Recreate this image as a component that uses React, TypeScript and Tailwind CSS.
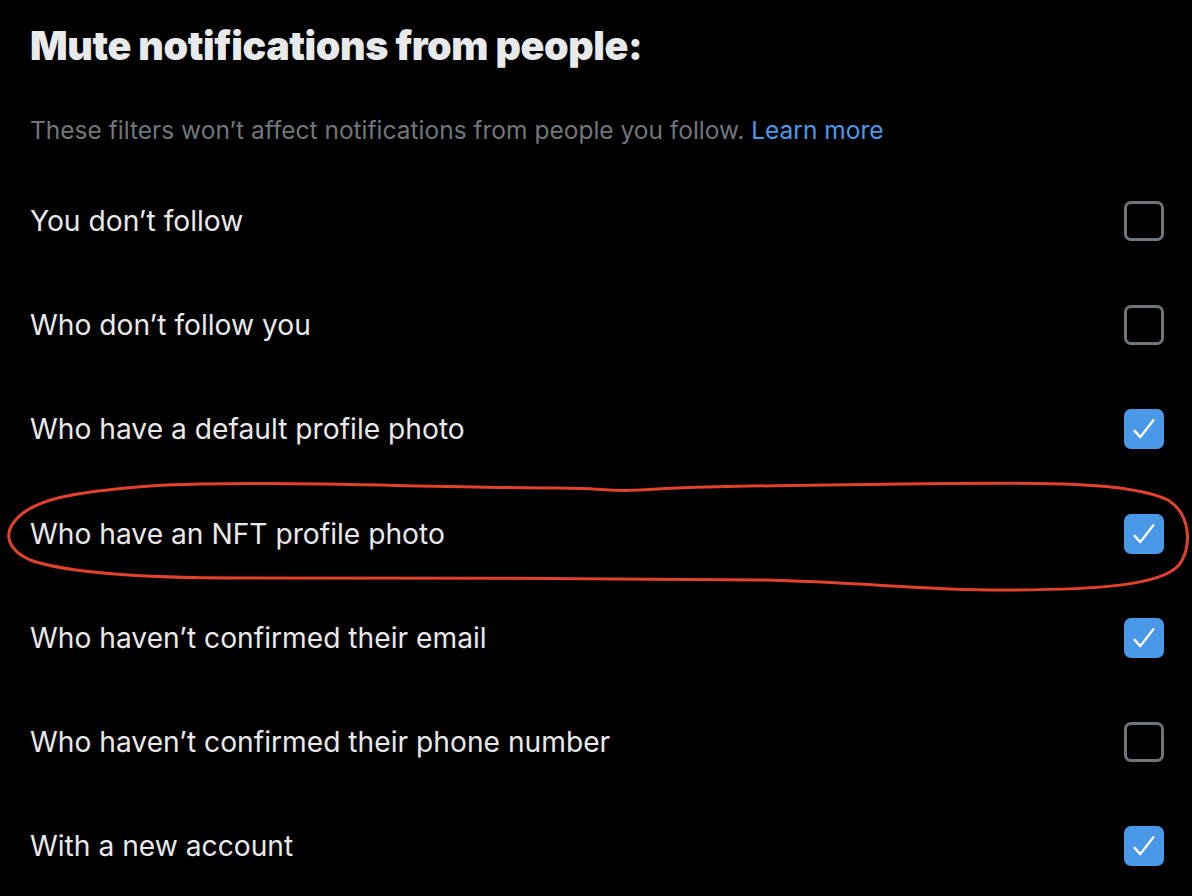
import React from "react";

const rows: { label: string; checked: boolean }[] = [
  { label: "You don’t follow", checked: false },
  { label: "Who don’t follow you", checked: false },
  { label: "Who have a default profile photo", checked: true },
  { label: "Who have an NFT profile photo", checked: true },
  { label: "Who haven’t confirmed their email", checked: true },
  { label: "Who haven’t confirmed their phone number", checked: false },
  { label: "With a new account", checked: true },
];

function Checkbox({ checked }: { checked: boolean }) {
  if (checked) {
    return (
      <div className="w-[40px] h-[40px] rounded-[7px] bg-[#4a99e9] flex items-center justify-center">
        <svg width="30" height="30" viewBox="0 0 24 24" fill="none">
          <path d="M4.5 13.5l4.5 5L19.5 5" stroke="white" strokeWidth="1.9" strokeLinecap="round" strokeLinejoin="round" />
        </svg>
      </div>
    );
  }
  return <div className="w-[40px] h-[40px] rounded-[7px] border-[3px] border-[#6e767d]" />;
}

export default function App() {
  return (
    <div
      className="relative w-[1192px] h-[896px] bg-black overflow-hidden text-[#e7e9ea]"
      style={{ fontFamily: "Inter, 'Liberation Sans', sans-serif" }}
    >
      <div className="px-[30px] pt-[22px]">
        <h1 className="text-[39.4px] leading-[48px] font-black tracking-[-0.4px] text-[#e7e9ea]">
          Mute notifications from people:
        </h1>
        <p className="mt-[44px] text-[24.5px] leading-[32px] text-[#71767b]">
          These filters won’t affect notifications from people you follow.{" "}
          <span className="text-[#4a99e9]">Learn more</span>
        </p>
      </div>
      <div className="pl-[30px] pr-[28px] mt-[23px]">
        {rows.map((r) => (
          <div key={r.label} className="h-[104.2px] flex items-center justify-between">
            <span className="text-[28.2px] leading-[32px]">{r.label}</span>
            <Checkbox checked={r.checked} />
          </div>
        ))}
      </div>
      <svg className="absolute left-0 top-0 pointer-events-none" width="1192" height="896">
        <path
          d="M14 522 C 30 500, 70 492, 150 486 C 260 480, 400 487, 560 488 C 600 488, 610 492, 640 490 C 700 486, 760 486, 900 484 C 1050 482, 1130 482, 1168 500 C 1192 515, 1192 550, 1178 566 C 1160 585, 1100 590, 1000 590 C 920 590, 860 582, 760 580 C 600 578, 400 578, 240 578 C 150 578, 70 574, 30 560 C 8 550, 4 535, 14 522 Z"
          fill="none"
          stroke="#e2422c"
          strokeWidth="3"
          strokeLinejoin="round"
        />
      </svg>
    </div>
  );
}
